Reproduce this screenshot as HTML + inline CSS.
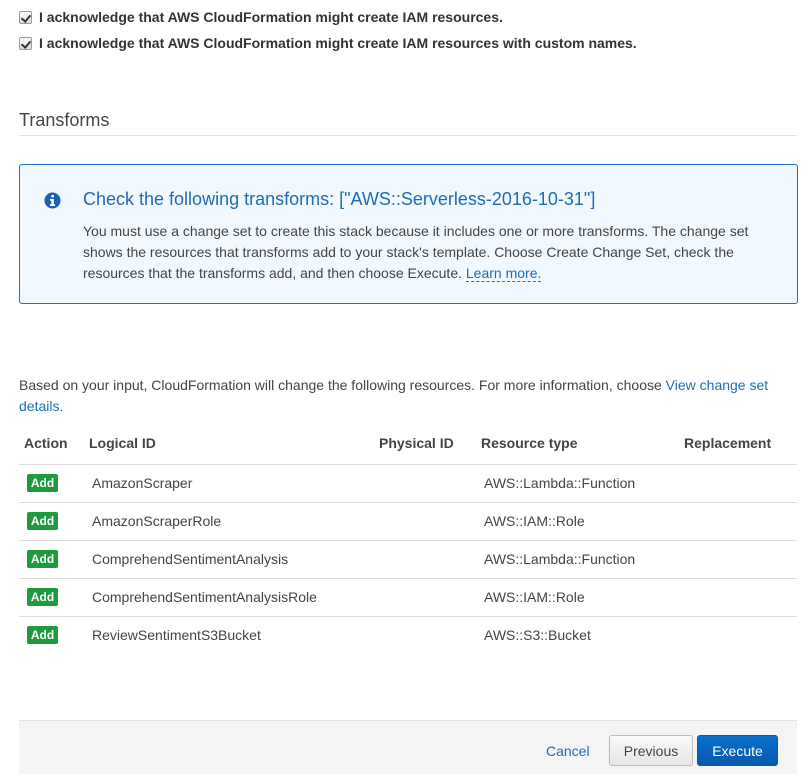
<!DOCTYPE html>
<html><head><meta charset="utf-8"><style>
*{margin:0;padding:0;box-sizing:border-box}
body{width:806px;height:774px;background:#fff;font-family:"Liberation Sans",Arial,sans-serif;color:#444;position:relative;overflow:hidden;font-size:14px}
.a{position:absolute;white-space:nowrap}
.cb{position:absolute;width:13px;height:13px;border:1px solid #999;border-radius:2px;background:linear-gradient(#fdfdfd,#ddd)}
.cb::after{content:"";position:absolute;left:3px;top:1px;width:4px;height:7px;border:solid #333;border-width:0 2px 2px 0;transform:rotate(40deg)}
.hr{position:absolute;left:19px;width:778px;height:1px;background:#ddd}
.add{position:absolute;left:27px;width:31px;height:18px;background:#1d9b3e;border-radius:2px;color:#fff;font-weight:bold;font-size:12px;text-align:center;line-height:18px}
.th{font-weight:bold;color:#444}
a{color:#1e6bb8;text-decoration:none}
</style></head><body>
<div class="cb" style="left:19px;top:11px"></div>
<div class="a" style="left:39px;top:9px;font-weight:bold;font-size:14px;color:#333">I acknowledge that AWS CloudFormation might create IAM resources.</div>
<div class="cb" style="left:19px;top:37px"></div>
<div class="a" style="left:39px;top:35px;font-weight:bold;font-size:14px;color:#333">I acknowledge that AWS CloudFormation might create IAM resources with custom names.</div>

<div class="a" style="left:19px;top:110px;font-size:18px;color:#444">Transforms</div>
<div class="hr" style="top:135px;background:#e2e2e2"></div>

<div class="a" style="left:19px;top:164px;width:779px;height:140px;border:1px solid #1a73c2;border-radius:3px;background:#f1f8fe"></div>
<svg class="a" style="left:44px;top:192px" width="17" height="17" viewBox="0 0 17 17"><circle cx="8.5" cy="8.5" r="8" fill="#1a5fb4"/><rect x="7.3" y="3" width="2.6" height="2.4" fill="#fff"/><path d="M6 7h3.9v5.3h1.2v1.7H6v-1.7h1.3V8.7H6z" fill="#fff"/></svg>
<div class="a" style="left:83px;top:189px;font-size:18px;color:#1e6bb8">Check the following transforms: ["AWS::Serverless-2016-10-31"]</div>
<div class="a" style="left:83px;top:221px;line-height:21px;font-size:14px;color:#444;white-space:normal;width:700px">You must use a change set to create this stack because it includes one or more transforms. The change set shows the resources that transforms add to your stack's template. Choose Create Change Set, check the resources that the transforms add, and then choose Execute. <a style="border-bottom:1px dashed #1e6bb8">Learn more.</a></div>

<div class="a" style="left:19px;top:375px;line-height:21px;white-space:normal;width:770px">Based on your input, CloudFormation will change the following resources. For more information, choose <a>View change set details.</a></div>

<div class="a th" style="left:24px;top:435px">Action</div>
<div class="a th" style="left:89px;top:435px">Logical ID</div>
<div class="a th" style="left:379px;top:435px">Physical ID</div>
<div class="a th" style="left:481px;top:435px">Resource type</div>
<div class="a th" style="left:684px;top:435px">Replacement</div>
<div class="hr" style="top:464px"></div>

<div class="add" style="top:474px">Add</div><div class="a" style="left:92px;top:475px">AmazonScraper</div><div class="a" style="left:484px;top:475px">AWS::Lambda::Function</div>
<div class="hr" style="top:502px"></div>
<div class="add" style="top:512px">Add</div><div class="a" style="left:92px;top:513px">AmazonScraperRole</div><div class="a" style="left:484px;top:513px">AWS::IAM::Role</div>
<div class="hr" style="top:540px"></div>
<div class="add" style="top:550px">Add</div><div class="a" style="left:92px;top:551px">ComprehendSentimentAnalysis</div><div class="a" style="left:484px;top:551px">AWS::Lambda::Function</div>
<div class="hr" style="top:578px"></div>
<div class="add" style="top:588px">Add</div><div class="a" style="left:92px;top:589px">ComprehendSentimentAnalysisRole</div><div class="a" style="left:484px;top:589px">AWS::IAM::Role</div>
<div class="hr" style="top:616px"></div>
<div class="add" style="top:626px">Add</div><div class="a" style="left:92px;top:627px">ReviewSentimentS3Bucket</div><div class="a" style="left:484px;top:627px">AWS::S3::Bucket</div>

<div class="a" style="left:19px;top:720px;width:778px;height:54px;background:#f4f4f4;border-top:1px solid #e2e2e2"></div>
<div class="a" style="left:546px;top:743px;color:#1e6bb8">Cancel</div>
<div class="a" style="left:609px;top:735px;width:84px;height:31px;border:1px solid #bbb;border-radius:3px;background:linear-gradient(#fafafa,#e6e6e6);text-align:center;line-height:30px;color:#444">Previous</div>
<div class="a" style="left:697px;top:735px;width:81px;height:31px;border:1px solid #0a5aa8;border-radius:3px;background:linear-gradient(#0b6fc9,#0759ac);text-align:center;line-height:30px;color:#fff">Execute</div>
</body></html>
